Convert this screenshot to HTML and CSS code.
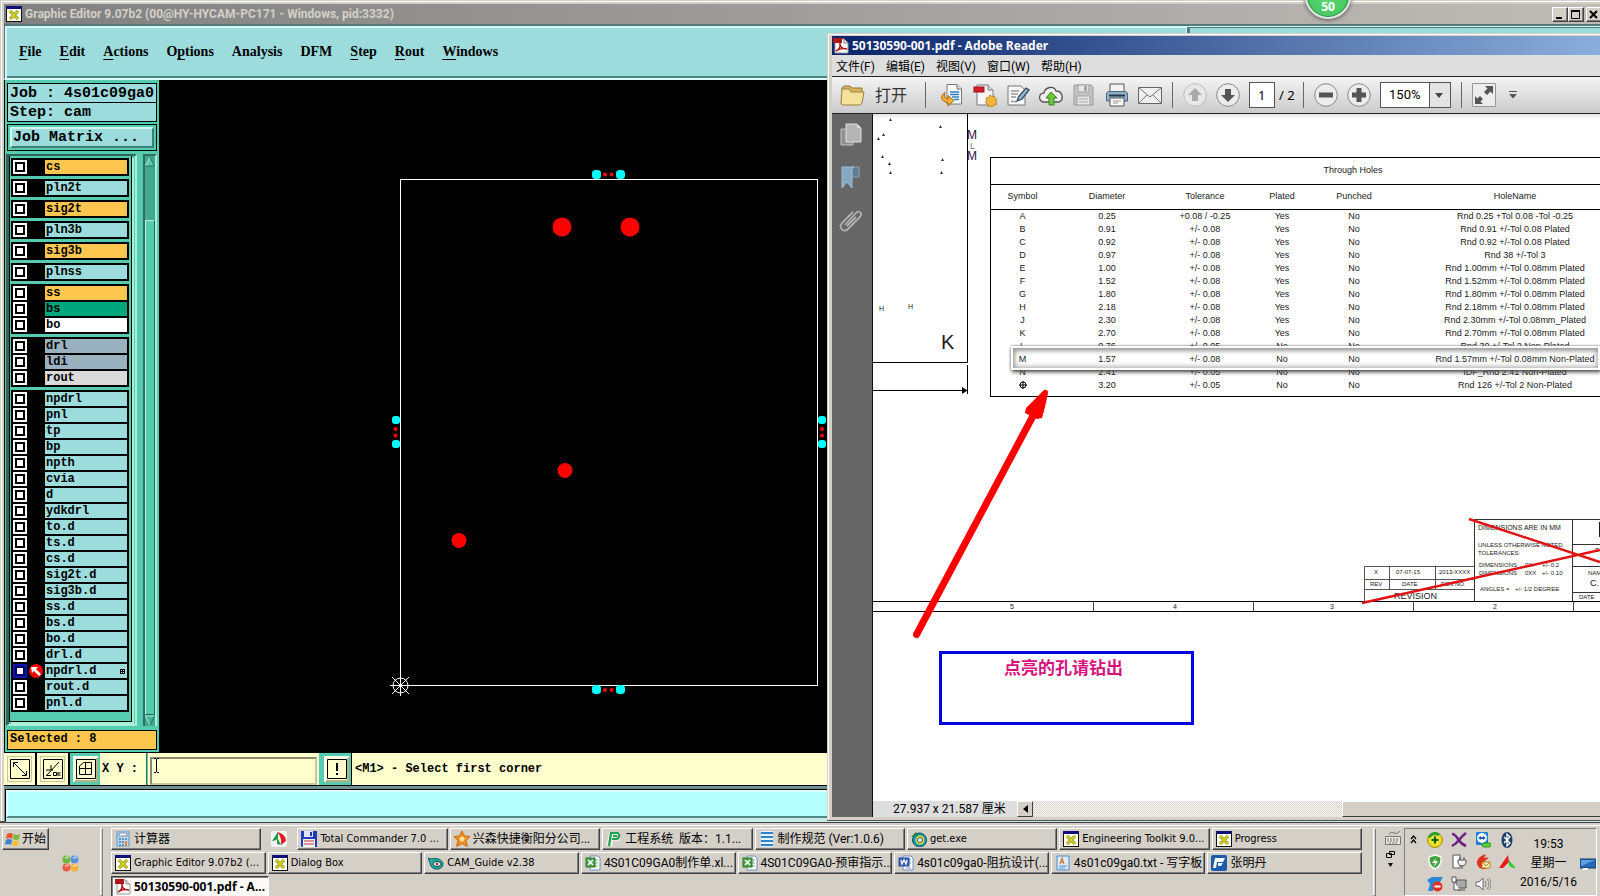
FILE: index.html
```html
<!DOCTYPE html>
<html lang="zh-CN">
<head>
<meta charset="utf-8">
<title>50130590-001.pdf - Adobe Reader</title>
<link rel="stylesheet" href="styles.css">
</head>
<body>
<svg class="defs" width="0" height="0" aria-hidden="true">
  <symbol id="i-x" viewBox="0 0 16 16"><rect width="16" height="16" fill="#111"/><rect width="15" height="3" fill="#10107a"/><rect x="1" y="3" width="14" height="12" fill="#fffff4"/><path d="M4 5l8 8M12 5l-8 8" stroke="#7c7c10" stroke-width="3"/><path d="M4 5l8 8M12 5l-8 8" stroke="#dede20" stroke-width="1.6"/></symbol>
  <symbol id="i-pdf" viewBox="0 0 16 16"><path d="M2 1h9l4 4v10H2z" fill="#fff" stroke="#999"/><path d="M11 1v4h4" fill="#ddd" stroke="#888"/><rect width="9" height="5" fill="#b01818"/><path d="M3 13c3-1 5-5 4-8-1 4 3 6 7 6-4-1-8 0-11 2z" fill="none" stroke="#b01010" stroke-width="1.4"/></symbol>
  <symbol id="i-xls" viewBox="0 0 16 16"><path d="M5 1h8l2 2v12H5z" fill="#fff" stroke="#6d8fc0"/><path d="M8 5h5M8 8h5M8 11h5" stroke="#78b078"/><rect x="1" y="3" width="9" height="9" fill="#4d9e4a" stroke="#2b7a2b"/><path d="M3 5l5 5M8 5l-5 5" stroke="#fff" stroke-width="1.6"/></symbol>
  <symbol id="i-word" viewBox="0 0 16 16"><path d="M5 1h8l2 2v12H5z" fill="#fff" stroke="#6d8fc0"/><path d="M10 5h3M10 8h3M8 13h5" stroke="#7892c8"/><rect x="1" y="3" width="10" height="8" fill="#3b66b8" stroke="#254a94"/><path d="M3 5l1 4 2-4 2 4 1-4" fill="none" stroke="#fff" stroke-width="1.3"/></symbol>
</svg>
<main class="desktop">

<section class="editor">
  <header class="editor-title">
    <svg class="ico"><use href="#i-x"/></svg>
    <h1>Graphic Editor 9.07b2 (00@HY-HYCAM-PC171 - Windows, pid:3332)</h1>
    <div class="winbtns">
      <button aria-label="Minimize"><svg viewBox="0 0 14 13"><path d="M3 10h6" stroke="#000" stroke-width="2"/></svg></button>
      <button aria-label="Maximize"><svg viewBox="0 0 14 13"><path d="M2.500 2.500h8v8h-8z" fill="none" stroke="#000"/><path d="M2 3h9" stroke="#000" stroke-width="2"/></svg></button>
      <button aria-label="Close" class="close"><svg viewBox="0 0 14 13"><path d="M3 3l7 7M10 3l-7 7" stroke="#000" stroke-width="2"/></svg></button>
    </div>
  </header>
  <nav class="menubar">
    <button><u>F</u>ile</button><button><u>E</u>dit</button><button><u>A</u>ctions</button><button>O<u>p</u>tions</button><button>Analysis</button><button>DFM</button><button><u>S</u>tep</button><button><u>R</u>out</button><button><u>W</u>indows</button>
    <div class="menubar-end"></div>
  </nav>
  <div class="work">
    <aside class="side">
      <div class="job">Job : 4s01c09ga0</div>
      <div class="job">Step: cam</div>
      <div class="matrix"><button>Job Matrix ...</button></div>
      <div class="layers">
        <div class="frame"><div class="list">
          <div class="group"><label><input type="checkbox"><i></i><span class="amber">cs</span></label></div>
          <div class="group"><label><input type="checkbox"><i></i><span>pln2t</span></label></div>
          <div class="group"><label><input type="checkbox"><i></i><span class="amber">sig2t</span></label></div>
          <div class="group"><label><input type="checkbox"><i></i><span>pln3b</span></label></div>
          <div class="group"><label><input type="checkbox"><i></i><span class="amber">sig3b</span></label></div>
          <div class="group"><label><input type="checkbox"><i></i><span>plnss</span></label></div>
          <div class="group">
            <label><input type="checkbox"><i></i><span class="amber">ss</span></label>
            <label><input type="checkbox"><i></i><span class="green">bs</span></label>
            <label><input type="checkbox"><i></i><span class="white">bo</span></label>
          </div>
          <div class="group">
            <label><input type="checkbox"><i></i><span class="slate">drl</span></label>
            <label><input type="checkbox"><i></i><span class="slate">ldi</span></label>
            <label><input type="checkbox"><i></i><span class="grey">rout</span></label>
          </div>
          <div class="group">
            <label><input type="checkbox"><i></i><span>npdrl</span></label>
            <label><input type="checkbox"><i></i><span>pnl</span></label>
            <label><input type="checkbox"><i></i><span>tp</span></label>
            <label><input type="checkbox"><i></i><span>bp</span></label>
            <label><input type="checkbox"><i></i><span>npth</span></label>
            <label><input type="checkbox"><i></i><span>cvia</span></label>
            <label><input type="checkbox"><i></i><span>d</span></label>
            <label><input type="checkbox"><i></i><span>ydkdrl</span></label>
            <label><input type="checkbox"><i></i><span>to.d</span></label>
            <label><input type="checkbox"><i></i><span>ts.d</span></label>
            <label><input type="checkbox"><i></i><span>cs.d</span></label>
            <label><input type="checkbox"><i></i><span>sig2t.d</span></label>
            <label><input type="checkbox"><i></i><span>sig3b.d</span></label>
            <label><input type="checkbox"><i></i><span>ss.d</span></label>
            <label><input type="checkbox"><i></i><span>bs.d</span></label>
            <label><input type="checkbox"><i></i><span>bo.d</span></label>
            <label><input type="checkbox"><i></i><span>drl.d</span></label>
            <label><input type="checkbox" checked><i><svg viewBox="0 0 14 14"><circle cx="7" cy="7" r="7" fill="#f00000"/><path d="M2 3h7L7 5l5 5-2 2-5-5-2 2z" fill="#fff"/></svg></i><span class="work-layer">npdrl.d<svg viewBox="0 0 5 5"><rect width="5" height="5"/><path d="M1 1h1v1H1zM3 1h1v1H3zM1 3h1v1H1zM3 3h1v1H3z" fill="#fff"/></svg></span></label>
            <label><input type="checkbox"><i></i><span>rout.d</span></label>
            <label><input type="checkbox"><i></i><span>pnl.d</span></label>
          </div>
        </div></div>
        <div class="scroll">
          <svg viewBox="0 0 11 11"><rect width="11" height="11" fill="#45a68f"/><path d="M5.500 1l5 9.500H.5z" fill="#58cbb0"/><path d="M5.500 1L.5 10.500" stroke="#b4f4e0"/><path d="M5.500 1l5 9.500H.5" fill="none" stroke="#236353"/></svg>
          <div class="thumb"></div>
          <svg viewBox="0 0 11 11"><rect width="11" height="11" fill="#45a68f"/><path d="M5.500 10.500l5-10H.5z" fill="#45b29a"/><path d="M10.500.5H.5l5 10" fill="none" stroke="#b4f4e0"/><path d="M5.500 10.500l5-10" stroke="#236353"/></svg>
        </div>
      </div>
      <div class="selected">Selected : 8</div>
    </aside>
    <div class="canvas">
      <svg width="1440" height="672" viewBox="159 80 1440 672">
        <rect x="400.500" y="179.500" width="417" height="506" fill="none" stroke="#fff"/>
        <g fill="#f00">
          <circle cx="562" cy="227" r="9.500"/><circle cx="630" cy="227" r="9.500"/>
          <circle cx="565" cy="470.500" r="7.500"/><circle cx="459" cy="540.500" r="7.500"/>
          <circle cx="605" cy="174.500" r="2"/><circle cx="611.500" cy="174.500" r="2"/>
          <circle cx="605" cy="690" r="2"/><circle cx="611.500" cy="690" r="2"/>
          <circle cx="395.500" cy="429" r="2"/><circle cx="395.500" cy="435.500" r="2"/>
          <circle cx="822" cy="429" r="2"/><circle cx="822" cy="435.500" r="2"/>
        </g>
        <g fill="#0ff">
          <rect x="592" y="170" width="9" height="9" rx="3.500"/><rect x="616" y="170" width="9" height="9" rx="3.500"/>
          <rect x="592" y="685" width="9" height="9" rx="3.500"/><rect x="616" y="685" width="9" height="9" rx="3.500"/>
          <rect x="392" y="416" width="8" height="8" rx="3"/><rect x="392" y="440" width="8" height="8" rx="3"/>
          <rect x="818" y="416" width="8" height="8" rx="3"/><rect x="818" y="440" width="8" height="8" rx="3"/>
        </g>
        <g fill="none" stroke="#fff"><circle cx="400.500" cy="685.500" r="7.500"/><path d="M390 685.500h22M400.500 675v21M392 677l17 17M409 677l-17 17"/></g>
      </svg>
    </div>
  </div>
  <div class="cmd">
    <button class="tool" aria-label="Zoom area"><svg viewBox="0 0 20 20"><path d="M.5.500h19v19H.5z"/><path d="M4 4l12 12M3.500 8V3.500H8M16.500 12v4.500H12"/></svg></button>
    <button class="tool" aria-label="Angle snap"><svg viewBox="0 0 20 20"><path d="M.5.500h19v19H.5z"/><path d="M16 3L4 16M8 6v5M3 11h7M3 16.500h5M10.500 13.500h3v3h-3zM15 13v4M17.500 13l-2 2 2 2"/></svg></button>
    <button class="tool on" aria-label="Grid snap"><svg viewBox="0 0 20 20"><path d="M.5.500h19v19H.5z"/><path d="M3.500 7l4-3.500h8v12h-12zM9.500 3.500v12M3.500 9.500h12"/></svg></button>
    <label class="xy" for="xy">X Y :</label>
    <div class="xywrap"><input id="xy" type="text"><svg viewBox="0 0 7 15"><path d="M1 .5h2M4 .5h2M3.500 1v13M1 14.500h2M4 14.500h2"/></svg></div>
    <button class="tool on" aria-label="Message"><svg viewBox="0 0 20 20"><path d="M.5.500h19v19H.5z"/><path d="M10 4v8M10 14v2" stroke-width="2"/></svg></button>
    <output>&lt;M1&gt; - Select first corner</output>
  </div>
  <div class="msgbar"><div></div></div>
</section>

<section class="reader">
  <header class="reader-title"><svg class="ico"><use href="#i-pdf"/></svg><h2>50130590-001.pdf - Adobe Reader</h2></header>
  <nav class="reader-menu"><button>文件(F)</button><button>编辑(E)</button><button>视图(V)</button><button>窗口(W)</button><button>帮助(H)</button></nav>
  <div class="toolbar">
    <button class="open"><svg viewBox="0 0 26 24"><path d="M2 20V5l2-2h6l2 2h10v4" fill="#d8b660" stroke="#8c7434"/><path d="M1 21L2 6h7l2 3h13l-2 11-2 2H3z" fill="#f6e29a" stroke="#9a8140"/></svg>打开</button>
    <span class="sep first"></span>
    <button aria-label="Export"><svg viewBox="0 0 24 24"><path d="M7 1.500h10l4.500 4.500v15H7z" fill="#fafafa" stroke="#777"/><path d="M17 1.500v4.500h4.500" fill="#ddd" stroke="#777"/><path d="M10 9h9M10 11.500h9M12 14h7M14 16.500h5" stroke="#2c7cc8" stroke-width="1.500"/><path d="M5 9.500c-5 3-5 9 3 10v3.500l6-5.500-6-5v3.500c-3 0-4.500-3-3-6.500z" fill="#f5ad35" stroke="#a86a10"/></svg></button>
    <button aria-label="Create PDF"><svg viewBox="0 0 24 24"><path d="M4 2h11l5 5v15H4z" fill="#f7f7f7" stroke="#777"/><path d="M15 2v5h5" fill="#ddd" stroke="#777"/><rect x="1" y="4" width="10" height="5" fill="#d21c28" stroke="#a01018"/><path d="M17 12l2 1.500 2.500-.5.500 2.500 2 1.500-1 2 .5 2.500-2.500.5-1.500 2-2-1-2.500.5-.5-2.500-2-1.500 1-2-.5-2.500 2.500-.5z" fill="#f2b63e" stroke="#c08420"/></svg></button>
    <button aria-label="Edit PDF"><svg viewBox="0 0 24 24"><path d="M2 3h13l4 4v15H2z" fill="#f7f7f7" stroke="#777"/><path d="M5 8h8M5 11h7M5 14h5M5 19c3-3 2 2 5-1" fill="none" stroke="#666"/><path d="M11 18l2-5 7-8 3 2-7 9z" fill="#90b5d0" stroke="#33485a" stroke-width="1.300"/></svg></button>
    <button aria-label="Upload"><svg viewBox="0 0 24 24"><path d="M5 19a4.500 4.500 0 0 1 0-9c1-6 10-8 12-2 7 0 8 9 3 11z" fill="#eee" stroke="#555" stroke-width="1.300"/><path d="M12 9l6 6h-3v7h-5v-7H7z" fill="#68c838" stroke="#38841c"/></svg></button>
    <button aria-label="Save"><svg viewBox="0 0 24 24"><path d="M2 2h17l2 2v18H2z" fill="#c4c4c4" stroke="#9a9a9a"/><path d="M6 2h11v7H6zM5 13h13v9H5z" fill="#e6e6e6" stroke="#a0a0a0"/><path d="M12 3h3v5h-3z" fill="#a6a6a6"/><path d="M7 16h9M7 19h9" stroke="#aaa"/></svg></button>
    <button aria-label="Print"><svg viewBox="0 0 24 24"><path d="M5 10V1h14v9" fill="#f4f4f4" stroke="#555"/><path d="M1.500 10l2-1.500h17l2 1.500v8h-21z" fill="#8fb2cc" stroke="#4a6478"/><path d="M4 12.500h16" stroke="#26384a" stroke-width="2"/><path d="M5 15h14v8H5z" fill="#fafafa" stroke="#555"/><path d="M8 18h8M8 20h5" stroke="#999"/></svg></button>
    <button aria-label="Mail"><svg viewBox="0 0 24 24"><path d="M.5 4.500h23v16H.5z" fill="#f0f0f0" stroke="#666"/><path d="M1 5l11 9 11-9M1 20l8-8M23 20l-8-8" fill="none" stroke="#777"/></svg></button>
    <span class="sep"></span>
    <button aria-label="Previous page"><svg viewBox="0 0 24 24"><circle cx="12" cy="12" r="11.300" fill="#e8e8e8" stroke="#bbb"/><path d="M12 5l7 7h-4v6H9v-6H5z" fill="#a9a9a9"/></svg></button>
    <button aria-label="Next page"><svg viewBox="0 0 24 24"><circle cx="12" cy="12" r="11.300" fill="#ececec" stroke="#888"/><path d="M12 19l7-7h-4V6H9v6H5z" fill="#555"/></svg></button>
    <input class="page" type="text" value="1" aria-label="Page">
    <span class="of">/ 2</span>
    <span class="sep"></span>
    <button aria-label="Zoom out"><svg viewBox="0 0 24 24"><circle cx="12" cy="12" r="11.300" fill="#ececec" stroke="#888"/><path d="M5 9.500h14v5H5z" fill="#555"/></svg></button>
    <button aria-label="Zoom in"><svg viewBox="0 0 24 24"><circle cx="12" cy="12" r="11.300" fill="#ececec" stroke="#888"/><path d="M9.500 5h5v4.500H19v5h-4.500V19h-5v-4.500H5v-5h4.500z" fill="#555"/></svg></button>
    <div class="zoom"><select aria-label="Zoom"><option>150%</option></select><svg viewBox="0 0 8 5"><path d="M0 0h8L4 5z" fill="#444"/></svg></div>
    <span class="sep"></span>
    <button aria-label="Read mode"><svg viewBox="0 0 24 24"><path d="M.5.500h23v23H.5z" fill="#ececec" stroke="#999"/><path d="M13 3h8v8l-2.500-2.500-3.500 3.500-3-3L15.500 5.500zM11 21H3v-8l2.500 2.500L8 13l3 3-2.500 2.500z" fill="#555"/></svg></button>
    <button class="more" aria-label="More tools"><svg viewBox="0 0 10 8"><path d="M1 .5h8M2 3.500h6L5 7z" stroke="#555" fill="#555"/></svg></button>
  </div>
  <div class="reader-body">
    <aside class="rail">
      <button aria-label="Pages"><svg viewBox="0 0 24 24"><path d="M2 7h12v16H2z" fill="#8f8f8f" stroke="#c4c4c4"/><path d="M7 2h11l4 4v14H7z" fill="#b4b4b4" stroke="#ddd"/><path d="M18 2v4h4" fill="#ddd"/></svg></button>
      <button aria-label="Bookmarks"><svg viewBox="0 0 24 24"><path d="M12 2h8v10h-7z" fill="#5e7d92" stroke="#87a5b8"/><path d="M3 2h12l-2 2v19l-5-6-5 6z" fill="#84a8c2" stroke="#a0bccf"/></svg></button>
      <button aria-label="Attachments"><svg viewBox="0 0 24 24"><path d="M6 17L17 5c3-3 7 0 4 4L9 21c-4 4-10-1-6-6L14 4M17 9l-9 9" fill="none" stroke="#b0b0b0" stroke-width="1.800"/></svg></button>
    </aside>
    <div class="page-area">
      <div class="doc">
        <svg class="drawing" width="727" height="686" viewBox="873 114 727 686">
          <g fill="none" stroke="#000">
            <path d="M967.500 114v248.500H873M967.500 365v29M873 390.500h94M873 601.500h727M873 611.500h727"/>
            <path stroke="#444" d="M1093.500 602v9M1253.500 602v9M1413.500 602v9M1573.500 602v9"/>
            <path stroke="#333" d="M1474.500 601V519.500H1600M1572.500 519v82M1572 544.500h28M1572 566.500h28M1572 592.500h28"/>
            <path stroke="#555" d="M1364.500 601v-34.500h110M1364 579.500h110M1364 589.500h110M1389.500 566v23M1435.500 566v23"/>
          </g>
          <path d="M962 387l5.500 3.500-5.500 3.500z"/>
          <g fill="#333"><path d="M889 121l1.500-3 1.500 3zM939 128l1.500-3 1.500 3zM882 136l1.500-3 1.500 3zM877 140l1.500-3 1.500 3zM881 158l1.500-3 1.500 3zM888 165l1.500-3 1.500 3zM889 174l1.500-3 1.500 3zM941 161l1.500-3 1.500 3zM940 174l1.500-3 1.500 3z"/></g>
          <g class="t" fill="#1a1a22">
            <text class="s12" x="967" y="139" fill="#2a1240">M</text><text class="s9" x="970" y="149" fill="#777">L</text><text class="s12" x="967" y="160" fill="#2a1240">M</text>
            <text class="s20" x="941" y="349">K</text>
            <text class="s7" x="879" y="311">H</text><text class="s7" x="908" y="309">H</text>
            <text class="s7" x="1010" y="609">5</text><text class="s7" x="1173" y="609">4</text><text class="s7" x="1330" y="609">3</text><text class="s7" x="1493" y="609">2</text>
            <text class="s7" x="1478" y="530">DIMENSIONS ARE IN MM</text>
            <text class="s6" x="1478" y="547">UNLESS OTHERWISE NOTED,</text>
            <text class="s6" x="1478" y="555">TOLERANCES:</text>
            <text class="s6" x="1479" y="567">DIMENSIONS</text><text class="s6" x="1525" y="567">0X.</text><text class="s6" x="1542" y="567">+/- 0.2</text>
            <text class="s6" x="1479" y="575">DIMENSIONS</text><text class="s6" x="1525" y="575">0XX</text><text class="s6" x="1542" y="575">+/- 0.10</text>
            <text class="s6" x="1480" y="591">ANGLES =</text><text class="s6" x="1515" y="591">+/- 1/2 DEGREE</text>
            <text class="s6" x="1374" y="574">X</text><text class="s6" x="1396" y="574">07-07-15</text><text class="s6" x="1439" y="574">2013-XXXX</text>
            <text class="s6" x="1370" y="586">REV</text><text class="s6" x="1402" y="586">DATE</text><text class="s6" x="1441" y="586">ESN NO.</text>
            <text class="s9" x="1394" y="599">REVISION</text>
            <text class="s6" x="1595" y="552">E</text><text class="s6" x="1588" y="575">NAM</text><text class="s9" x="1590" y="586">C.</text><text class="s6" x="1579" y="599">DATE</text>
            <path d="M1599 522h1v15h-1z"/>
          </g>
          <path d="M1469 519l131 43M1362 603l238-53" stroke="#e01414" stroke-width="2.500"/>
        </svg>
        <div class="holes">
          <table>
            <colgroup><col class="c1"><col class="c2"><col class="c3"><col class="c4"><col class="c5"><col class="c6"><col class="c7"></colgroup>
            <thead>
              <tr><th colspan="7">Through Holes</th></tr>
              <tr class="heads"><th>Symbol</th><th>Diameter</th><th>Tolerance</th><th>Plated</th><th>Punched</th><th>HoleName</th><th></th></tr>
            </thead>
            <tbody>
              <tr><td>A</td><td>0.25</td><td>+0.08 / -0.25</td><td>Yes</td><td>No</td><td>Rnd 0.25 +Tol 0.08 -Tol -0.25</td><td></td></tr>
              <tr><td>B</td><td>0.91</td><td>+/- 0.08</td><td>Yes</td><td>No</td><td>Rnd 0.91 +/-Tol 0.08 Plated</td><td></td></tr>
              <tr><td>C</td><td>0.92</td><td>+/- 0.08</td><td>Yes</td><td>No</td><td>Rnd 0.92 +/-Tol 0.08 Plated</td><td></td></tr>
              <tr><td>D</td><td>0.97</td><td>+/- 0.08</td><td>Yes</td><td>No</td><td>Rnd 38 +/-Tol 3</td><td></td></tr>
              <tr><td>E</td><td>1.00</td><td>+/- 0.08</td><td>Yes</td><td>No</td><td>Rnd 1.00mm +/-Tol 0.08mm Plated</td><td></td></tr>
              <tr><td>F</td><td>1.52</td><td>+/- 0.08</td><td>Yes</td><td>No</td><td>Rnd 1.52mm +/-Tol 0.08mm Plated</td><td></td></tr>
              <tr><td>G</td><td>1.80</td><td>+/- 0.08</td><td>Yes</td><td>No</td><td>Rnd 1.80mm +/-Tol 0.08mm Plated</td><td></td></tr>
              <tr><td>H</td><td>2.18</td><td>+/- 0.08</td><td>Yes</td><td>No</td><td>Rnd 2.18mm +/-Tol 0.08mm Plated</td><td></td></tr>
              <tr><td>J</td><td>2.30</td><td>+/- 0.08</td><td>Yes</td><td>No</td><td>Rnd 2.30mm +/-Tol 0.08mm_Plated</td><td></td></tr>
              <tr><td>K</td><td>2.70</td><td>+/- 0.08</td><td>Yes</td><td>No</td><td>Rnd 2.70mm +/-Tol 0.08mm Plated</td><td></td></tr>
              <tr><td>L</td><td>0.76</td><td>+/- 0.05</td><td>No</td><td>No</td><td>Rnd 30 +/-Tol 2 Non-Plated</td><td></td></tr>
              <tr class="lit"><td>M</td><td>1.57</td><td>+/- 0.08</td><td>No</td><td>No</td><td>Rnd 1.57mm +/-Tol 0.08mm Non-Plated</td><td></td></tr>
              <tr><td>N</td><td>2.41</td><td>+/- 0.05</td><td>No</td><td>No</td><td>IDF_Rnd 2.41 Non-Plated</td><td></td></tr>
              <tr><td><svg class="cross" viewBox="0 0 8 8"><circle cx="4" cy="4" r="3" fill="none" stroke="#000"/><path d="M4 0v8M0 4h8" stroke="#000"/></svg></td><td>3.20</td><td>+/- 0.05</td><td>No</td><td>No</td><td>Rnd 126 +/-Tol 2 Non-Plated</td><td></td></tr>
            </tbody>
          </table>
          <div class="lens"></div>
        </div>
        <svg class="arrow" width="140" height="252" viewBox="910 388 140 252"><path d="M916.500 634.500L1034 414" stroke="#f00" stroke-width="7" stroke-linecap="round"/><path d="M1044 390q4-1 4 3l-3 14-3 11-5 1-12-6 1-5z" fill="#f00"/></svg>
        <p class="note">点亮的孔请钻出</p>
      </div>
      <footer class="reader-status"><span>27.937 x 21.587 厘米</span><button aria-label="Scroll left"><svg viewBox="0 0 5 8"><path d="M5 0v8L0 4z"/></svg></button><div class="track"></div><div class="hthumb"></div></footer>
    </div>
  </div>
</section>
<div class="badge">50</div>
</main>

<footer class="taskbar">
  <div class="startcol">
    <button class="start"><svg viewBox="0 0 16 16"><path d="M2 3q3-2 6 0L7 8Q4 6 1 8z" fill="#e8582c"/><path d="M9 3q3 2 6 0l-1 5q-3 2-6 0z" fill="#7cb83c"/><path d="M1 9q3-2 6 0l-1 5q-3-2-6 0z" fill="#3a80d8"/><path d="M8 9q3 2 6 0l-1 5q-3 2-6 0z" fill="#f4c030"/></svg>开始</button>
    <svg class="quick" viewBox="0 0 17 17"><circle cx="4.500" cy="4.500" r="4" fill="#6cb83c"/><circle cx="12.500" cy="4.500" r="4" fill="#5a94dc"/><circle cx="4.500" cy="12.500" r="4" fill="#e85a48"/><circle cx="12.500" cy="12.500" r="4" fill="#f4b038"/><path d="M3 3l4-1M11 3l4-1M3 11l4-1M11 11l4-1" stroke="#fff" opacity=".5" stroke-width="2"/></svg>
  </div>
  <span class="grip"></span>
  <div class="tasks">
    <div class="row">
      <button class="zh"><svg viewBox="0 0 16 16"><rect x="2" width="12" height="16" rx="1" fill="#b8dcf4" stroke="#5890c0"/><rect x="4" y="2" width="8" height="3" fill="#fff" stroke="#78a"/><path d="M4 8h2M7 8h2M10 8h2M4 11h2M7 11h2M4 14h2M7 14h2" stroke="#47a" stroke-width="1.500"/><path d="M11 10v5" stroke="#f08030" stroke-width="2"/></svg>计算器</button>
      <svg class="mini" viewBox="0 0 16 16"><rect width="16" height="16" rx="2" fill="#f4f4f4"/><path d="M7 1L1 10q4 0 6-3z" fill="#169a48"/><path d="M6 1q9 2 9 9l-5 4Q11 6 6 1z" fill="#e01c20"/><path d="M6 6l4 8-4-1z" fill="#169a48"/></svg>
      <button><svg viewBox="0 0 16 16"><path d="M0 0h16v16H1l-1-1z" fill="#2438b8"/><path d="M3 0h9v6H3z" fill="#dce4ff"/><path d="M9 1h2v4H9z" fill="#2438b8"/><path d="M2 8h12v8H2z" fill="#f4f4f4"/><path d="M3 10h10M3 13h10" stroke="#c03030"/></svg>Total Commander 7.0 ...</button>
      <button class="zh"><svg viewBox="0 0 16 16"><path d="M8 0l2.500 5 5.500.5-4 4 1.500 6L8 12.500 2.500 15.500 4 9.500 0 5.500 5.500 5z" fill="#f09020" stroke="#d06808"/><circle cx="8" cy="8" r="2.500" fill="#ffe0a0"/></svg>兴森快捷衡阳分公司...</button>
      <button class="zh"><svg viewBox="0 0 16 16"><path d="M3 1h11v9H7v5H0z" fill="#fff" opacity=".6"/><path d="M3 15L5 2h7q3 3-1 6H6M7 5h4" fill="none" stroke="#20a050" stroke-width="2.200"/></svg>工程系统&nbsp; 版本：1.1...</button>
      <button class="zh"><svg viewBox="0 0 16 16"><path d="M2 0h12v16H2z" fill="#e4f2ff"/><path d="M2 2h12M2 6h12M2 10h12M2 14h12" stroke="#2c84cc" stroke-width="2"/></svg>制作规范 (Ver:1.0.6)</button>
      <button><svg viewBox="0 0 16 16"><circle cx="8.500" cy="9" r="7" fill="#1c9a9a" stroke="#0c4c68"/><circle cx="9" cy="9" r="4.500" fill="#e8d838"/><circle cx="9" cy="9" r="2.500" fill="#f4fcff" stroke="#204c90"/><path d="M0 6l5-5 2 4z" fill="#208048"/></svg>get.exe</button>
      <button><svg><use href="#i-x"/></svg>Engineering Toolkit 9.0...</button>
      <button><svg><use href="#i-x"/></svg>Progress</button>
    </div>
    <div class="row">
      <button><svg><use href="#i-x"/></svg>Graphic Editor 9.07b2 (...</button>
      <button><svg><use href="#i-x"/></svg>Dialog Box</button>
      <button><svg viewBox="0 0 16 16"><path d="M0 3l3 1q9-2 12 4 1 4-4 6-8 1-9-6z" fill="#20b0a0" stroke="#0c6060"/><ellipse cx="9" cy="9" rx="4" ry="2.500" fill="#e8f8f0" stroke="#084848"/><circle cx="9" cy="9" r="1.300" fill="#b02020"/></svg>CAM_Guide v2.38</button>
      <button class="zh"><svg><use href="#i-xls"/></svg>4S01C09GA0制作单.xl...</button>
      <button class="zh"><svg><use href="#i-xls"/></svg>4S01C09GA0-预审指示...</button>
      <button class="zh"><svg><use href="#i-word"/></svg>4s01c09ga0-阻抗设计(...</button>
      <button class="zh"><svg viewBox="0 0 16 16"><path d="M2 1h12v14H2z" fill="#d8ecff" stroke="#4a88c8"/><path d="M4 11h8M4 13h6" stroke="#5890c8"/><path d="M5 9l2-6 2 6M6 7h3" fill="none" stroke="#e07830" stroke-width="1.300"/></svg>4s01c09ga0.txt - 写字板</button>
      <button class="zh"><svg viewBox="0 0 16 16"><rect width="16" height="16" rx="2" fill="#1c5cac"/><path d="M4 3h10l-2 4H6l-1 6H2l1-5zM7 8h5l-2 3H7z" fill="#fff"/></svg>张明丹</button>
    </div>
    <div class="row">
      <button class="active"><svg><use href="#i-pdf"/></svg>50130590-001.pdf - A...</button>
    </div>
  </div>
  <span class="grip"></span>
  <div class="lang">
    <svg viewBox="0 0 16 14"><path d="M4 3q2-3 5-1t6-2" fill="none" stroke="#777"/><path d="M.5 5.500h15v8H.5z" fill="#e6e3dc" stroke="#777"/><path d="M2 8h12M2 10h12M4 12h8" stroke="#777" stroke-dasharray="2 1"/></svg>
    <svg class="small" viewBox="0 0 9 7"><path d="M3.500.5h5v3h-5zM.5 2.500h5v4h-5z" fill="#d4d0c8" stroke="#000"/></svg>
    <svg class="small" viewBox="0 0 9 7"><path d="M2 1h5L4.500 5z"/></svg>
  </div>
  <div class="tray">
    <button class="chev" aria-label="Show hidden icons"><svg viewBox="0 0 7 9"><path d="M1 4l2.500-3L6 4M1 8l2.500-3L6 8" fill="none" stroke="#000" stroke-width="1.300"/></svg></button>
    <div class="icons">
      <svg viewBox="0 0 16 16"><circle cx="8" cy="8" r="7.500" fill="#f0d820" stroke="#a09010"/><path d="M1 5a7.500 7.500 0 0 1 12-3L8 8z" fill="#30a030"/><circle cx="8" cy="8" r="4.800" fill="#f0e840"/><path d="M8 4.500v7M4.500 8h7" stroke="#106010" stroke-width="2.200"/></svg>
      <svg viewBox="0 0 16 16"><path d="M1 2q3 0 6 5t8 7M15 1q-4 3-7 7t-7 6" fill="none" stroke="#702080" stroke-width="2.500"/></svg>
      <svg viewBox="0 0 16 16"><rect x="1" width="12" height="13" rx="1" fill="#1c80d8"/><circle cx="7" cy="6" r="5" fill="#fff"/><path d="M3 6l3-2v1h2V4l3 2-3 2V7H6v1z" fill="#1c60c0"/><rect x="7" y="11" width="9" height="4" rx="2" fill="#58d830" stroke="#309018"/></svg>
      <svg viewBox="0 0 16 16"><ellipse cx="8" cy="8" rx="5.500" ry="8" fill="#1c3c6c"/><path d="M5 5l6 6-3 3V2l3 3-6 6" fill="none" stroke="#fff" stroke-width="1.300"/></svg>
      <svg viewBox="0 0 16 16"><path d="M8 1l6 2q1 9-6 12Q1 12 2 3z" fill="#40a040" stroke="#f4fff0" stroke-width="1.500"/><path d="M9 4L5 9h3l-1 4 4-6H8z" fill="#fff"/></svg>
      <svg viewBox="0 0 16 16"><path d="M2 1h7v13H2z" fill="#fff" stroke="#555"/><path d="M7 6h8v3q-1 3-4 3T7 9zM9 3v3M13 3v3M11 12v3" fill="#eee" stroke="#555"/></svg>
      <svg viewBox="0 0 16 16"><path d="M11 0Q1 3 2 10q2 6 8 5 4-1 4-5-3-2-5 0 0-4 5-6-3-1-5 0z" fill="#e03020"/><path d="M7 8h8v6H7z" fill="#fff0b8" stroke="#c08020"/><path d="M7 8l4 4 4-4" fill="none" stroke="#c08020"/></svg>
      <svg viewBox="0 0 16 16"><path d="M9 1L0 14h4l6-6z" fill="#f01818"/><path d="M10 7l6 7-5-2z" fill="#18e018" stroke="#18d018"/></svg>
      <svg viewBox="0 0 16 16"><path d="M0 4l5-3h11l-3 5H8l-2 9H1l2-7z" fill="#2888d8"/><circle cx="10.500" cy="10.500" r="5" fill="#e03020"/><path d="M7.500 10.500h6" stroke="#fff" stroke-width="2"/></svg>
      <svg viewBox="0 0 16 16"><path d="M5 4h10v8H5z" fill="#aaa" stroke="#555"/><path d="M1 1h4v5H1zM3 6v8h6M7 14h7" fill="#fff" stroke="#555"/></svg>
      <svg viewBox="0 0 16 16"><path d="M1 6h3l4-4v12l-4-4H1z" fill="#fff" stroke="#666"/><path d="M10 5q2 3 0 6M12 3q4 5 0 10M14 2q4 6 0 12" fill="none" stroke="#888"/></svg>
    </div>
    <div class="clock"><span>19:53</span><span>星期一</span><span>2016/5/16</span></div>
    <svg class="desk" viewBox="0 0 16 12"><path d="M0 1h16v9H0z" fill="#2868b8" stroke="#103868"/><path d="M1 2h14L1 8z" fill="#60a0e0"/><path d="M3 11h5" stroke="#fff" stroke-width="2"/></svg>
  </div>
</footer>
</body>
</html>
```
FILE: styles.css
```css
*{box-sizing:border-box}
:root{--face:#d4d0c8;--teal:#55cbb0;--aqua:#9cdcdc;--mono:"Liberation Mono","DejaVu Sans Mono",monospace;--ui:"Noto Sans","Noto Sans CJK SC",sans-serif;--narrow:Roboto,"Noto Sans CJK SC",sans-serif}
body{margin:0;height:100vh;overflow:hidden;display:flex;flex-direction:column;background:var(--face);font:12px/16px var(--ui);color:#000}
button,input,select{font:inherit;color:inherit;margin:0;padding:0;border:0;background:none;border-radius:0}
h1,h2,p{margin:0;font-size:12px;line-height:16px}
svg{display:block;flex:none}
.defs{position:absolute}
.ico{width:16px;height:16px}
.desktop{flex:1;position:relative;overflow:hidden;min-height:0}

/* Graphic editor window */
.editor{position:absolute;inset:0;display:flex;flex-direction:column;padding:4px 0 0 4px;background:var(--face);box-shadow:inset 1px 1px 0 #d4d0c8,inset 2px 2px 0 #fff;border-bottom:1px solid #555}
.editor-title{display:flex;align-items:center;gap:3px;height:20px;flex:none;padding:0 2px;background:linear-gradient(90deg,#808080,#c0bcb8);color:#d4d0c8}
.editor-title h1{flex:1;font-family:var(--narrow);font-weight:700;white-space:nowrap}
.winbtns{display:flex}
.winbtns button{width:16px;height:15px;background:var(--face);border:1px solid;border-color:#fff #404040 #404040 #fff;box-shadow:inset -1px -1px 0 #808080;color:#000}
.winbtns svg{width:14px;height:13px}
.winbtns .close{margin:0 -4px 0 2px}
.menubar{display:flex;gap:18px;height:56px;flex:none;align-items:center;padding-left:14px;background:var(--aqua);border-top:2px solid #527a7a;border-left:1px solid #527a7a;border-bottom:2px solid #dcfafa;box-shadow:inset 0 2px 0 #d4f6f6,inset 2px 0 0 #d4f6f6,inset 0 -2px 0 #4c8484;font:bold 14px/20px "Liberation Serif",serif}
.menubar u{text-underline-offset:3px;text-decoration-thickness:1px}
.menubar-end{margin-left:auto;width:413px;height:50px;border-left:3px solid #527a7a;box-shadow:inset 0 1px 0 #527a7a,-1px 0 0 #e4ffff}
.work{display:flex;flex:1;min-height:0}
.side{width:155px;flex:none;background:var(--teal);border-left:1px solid #000;padding:3px 2px 0 2px;font:bold 15px/19px var(--mono)}
.job{height:20px;margin-bottom:-1px;border:1px solid #000;background:var(--aqua);padding-left:2px;white-space:nowrap}
.matrix{margin-top:3px;border:1px solid #000;padding:2px;height:27px}
.matrix button{display:block;width:100%;height:21px;line-height:17px;text-align:left;padding-left:1px;background:var(--aqua);border:2px solid;border-color:#d0f6f0 #3e7f74 #3e7f74 #d0f6f0;white-space:nowrap}
.layers{display:flex;gap:6px;margin:3px 0 0 -1px}
.frame{width:132px;border:solid;border-width:2px 2px 2px 3px;border-color:#2c6455 #a8f0d8 #a8f0d8 #2f6656;padding:0 3px 2px 0}
.list{border:1px solid #000;border-top:0;box-shadow:2px 2px 0 #a8f0d8;padding:2px 2px 9px 1px;display:grid;gap:3px;font-size:12px;line-height:14px}
.group{background:#000;padding:2px;display:grid;gap:2px}
.group label{display:flex;height:14px}
.group input{appearance:none;width:14px;height:14px;flex:none;background:#fff;box-shadow:inset 0 0 0 2px #fff,inset 0 0 0 4px #000}
.group input:checked{box-shadow:inset 0 0 0 2px #1414b4,inset 0 0 0 4px #000068}
.group i{width:18px;padding-left:2px}
.group i svg{width:14px;height:14px}
.group span{flex:1;background:var(--aqua);padding-left:1px}
.group .amber{background:#fdc64e}
.group .green{background:#00a67c}
.group .white{background:#fff}
.group .slate{background:#9ab2bf}
.group .grey{background:#dadada}
.group .work-layer{display:flex;align-items:center;justify-content:space-between;padding-right:2px}
.work-layer svg{width:5px;height:5px}
.scroll{width:14px;display:flex;flex-direction:column;background:#45a68f;border:solid;border-width:2px 2px 0 2px;border-color:#2c6f5f #a8f0d8 #a8f0d8 #2c6f5f}
.scroll svg{width:10px;height:11px}
.thumb{flex:1;margin-top:53px;background:var(--teal);border:1px solid;border-color:#b4f4e0 #236353 #236353 #b4f4e0}
.selected{margin-top:4px;height:20px;border:1px solid #000;background:#fdc64e;padding-left:2px;font-size:12px;line-height:17px}
.canvas{flex:1;background:#000;overflow:hidden}
.cmd{display:flex;flex:none;height:34px;border-top:1px solid #000;border-bottom:1px solid #000;background:#ffffce;font:bold 12px/32px var(--mono)}
.tool{width:33px;flex:none;display:grid;place-items:center;border-right:2px solid #000;box-shadow:inset 3px 3px 0 #ffffce,inset -3px -3px 0 #ffffce,inset 4px 4px 0 #c8c89c,inset -4px -4px 0 #c8c89c}
.tool svg{width:20px;height:20px;fill:none;stroke:#000}
.tool.on{width:30px;border:3px solid var(--teal);border-right-width:2px;box-shadow:inset 2px 2px 0 #fffff0,inset -2px -2px 0 #b4b488}
.xy{width:47px;padding-left:2px;border-right:1px solid #466}
.xywrap{width:174px;border:solid var(--teal);border-width:0 2px 0 1px;padding:2px;position:relative}
.xywrap input{width:100%;height:28px;border:2px solid;border-color:#8c8c6c #c8c89c #c8c89c #8c8c6c;background:#ffffce;padding-left:4px}
.xywrap svg{position:absolute;left:5px;top:5px;width:7px;height:15px;stroke:#000}
.cmd output{border-left:1px solid #000;padding-left:3px;white-space:nowrap}
.msgbar{height:35px;flex:none;border-top:3px solid #6f9292;border-left:1px solid #6f9292;padding:1px 0 3px 1px;background:#000}
.msgbar div{height:100%;background:#b6ffff;border:2px solid #e0ffff;border-bottom-color:#528a8a;box-shadow:0 4px 0 #c8ecec}

/* Reader window */
.reader{position:absolute;left:827px;right:0;top:33px;bottom:1px;display:flex;flex-direction:column;background:var(--face);padding:3px 0 3px 5px;border-bottom:1px solid #555;box-shadow:inset 1px 1px 0 #d4d0c8,inset 2px 2px 0 #fff}
.reader-title{height:19px;flex:none;display:flex;align-items:center;gap:3px;padding-left:1px;background:linear-gradient(90deg,#0a246a,#8aaedb);color:#fff}
.reader-menu{height:22px;flex:none;display:flex;align-items:center;gap:11px;padding:2px 0 0 4px;background:#dedede;border-bottom:1px solid #222;font-family:var(--narrow)}
.toolbar{height:37px;flex:none;display:flex;align-items:center;gap:9px;padding-left:8px;background:linear-gradient(#f4f4f4,#cbcbcb);border-bottom:1px solid #222;font-size:13px}
.toolbar button svg{width:24px;height:24px}
.toolbar .open{display:flex;align-items:center;gap:9px;font-size:16px;color:#333}
.toolbar .open svg{width:26px}
.toolbar .more svg{width:10px;height:8px}
.toolbar .more{margin-left:3px}
.sep{width:1px;height:26px;background:#666;margin:0 1px}
.sep.first{margin:0 5px 0 9px}
.page{width:26px;height:26px;border:1px solid #555;background:#fff;padding-left:8px}
.of{width:16px;margin:0 -2px 0 -5px;white-space:nowrap}
.zoom{position:relative;width:71px;height:26px}
.zoom select{appearance:none;width:100%;height:100%;border:1px solid #555;padding-left:8px;font-family:var(--narrow);background:linear-gradient(90deg,#fff 48px,#555 48px,#555 49px,#e4e4e4 49px)}
.zoom svg{position:absolute;right:8px;top:11px;width:8px;height:5px}
.reader-body{flex:1;display:flex;min-height:0}
.rail{width:41px;flex:none;background:#666;border-right:1px solid #111;padding:8px 0 0 7px;display:flex;flex-direction:column;gap:19px}
.rail svg{width:24px;height:24px}
.page-area{flex:1;min-width:0;display:flex;flex-direction:column}
.doc{flex:1;min-height:0;background:linear-gradient(#e4e4e4,#fff 5px);position:relative;overflow:hidden}
.drawing{position:absolute;left:0;top:0}
.t{font-family:"Liberation Sans",sans-serif;white-space:pre}
.s6{font-size:6px}.s7{font-size:7px}.s9{font-size:9px}.s12{font-size:12px}.s20{font-size:20px}
.holes{position:absolute;left:117px;top:43px;border:1px solid #000;padding-bottom:4px;font:9px/13px "Liberation Sans",sans-serif;color:#1a1a22}
.holes table{border-collapse:collapse;table-layout:fixed;width:724px}
.holes td,.holes th{padding:0;font-weight:400;text-align:center;white-space:nowrap;height:13px}
.holes th{height:26px;border-bottom:1px solid #000}
.holes .heads th{height:25px}
.c1{width:63px}.c2{width:106px}.c3{width:90px}.c4{width:64px}.c5{width:80px}.c6{width:242px}
.cross{width:8px;height:8px;margin:0 auto}
.lit{position:relative;z-index:2}
.lens{position:absolute;z-index:1;left:20px;top:188px;width:589px;height:24px;background:#fff;border:2px solid #fff;box-shadow:inset 2px 3px 4px #999,inset -2px -2px 4px #bbb,1px 2px 4px #444,0 0 2px #888}
.arrow{position:absolute;left:37px;top:274px}
.note{position:absolute;left:66px;top:537px;width:255px;height:74px;border:3px solid #0000e0;padding-right:6px;text-align:center;font-weight:700;font-size:17px;line-height:28px;color:#d8127d}
.reader-status{height:16px;flex:none;display:flex;background:#dedede;font-family:var(--narrow)}
.reader-status span{width:144px;padding-left:20px;white-space:nowrap}
.reader-status button{width:16px;display:grid;place-items:center;background:var(--face);border:1px solid;border-color:#fff #404040 #404040 #fff}
.reader-status button svg{width:5px;height:8px}
.track{flex:1;background:repeating-conic-gradient(#fff 0 25%,#d4d0c8 0 50%) 0 0/2px 2px}
.hthumb{width:258px;background:var(--face);border:1px solid;border-color:#fff #404040 #404040 #fff;border-right:0}
.badge{position:absolute;left:1305px;top:-27px;width:46px;height:46px;border-radius:50%;background:radial-gradient(circle,#5fd877,#3fc25c);border:2px solid #e0e8e0;box-shadow:inset 0 0 0 1px #2e8c48,0 1px 4px #555;color:#fff;font-weight:700;text-align:center;padding-top:24px}

/* Taskbar */
.taskbar{flex:none;height:74px;display:flex;padding:5px 3px 0 2px;border-top:1px solid #404040;box-shadow:inset 0 2px 0 #d4d0c8,inset 0 3px 0 #fff;font-family:var(--narrow)}
.startcol{width:98px}
.start,.row button{height:22px;display:flex;align-items:center;background:var(--face);border:1px solid;border-color:#fff #404040 #404040 #fff;box-shadow:inset -1px -1px 0 #808080;white-space:nowrap;overflow:hidden}
.start{width:47px;gap:1px;padding-left:2px}
.start svg,.row svg{width:16px;height:16px}
.quick{width:17px;height:17px;margin:5px 0 0 60px}
.grip{width:3px;border:1px solid;border-color:#fff #808080 #808080 #fff}
.tasks{flex:1;min-width:0;margin:0 11px 0 8px;display:flex;flex-direction:column;gap:2px}
.row{display:flex;gap:2px;align-items:center}
.row button{flex:1 1 0;min-width:0;gap:3px;padding-left:3px;font-family:"DejaVu Sans Condensed","DejaVu Sans",sans-serif;font-size:11px}
.row .zh{font-family:var(--narrow);font-size:12px}
.row .mini{margin:0 8px}
.row button.active{flex:0 0 158px;font-family:var(--ui);font-size:12px;font-weight:700;background:#fbfaf8;border-color:#404040 #fff #fff #404040;box-shadow:inset 1px 1px 0 #808080}
.lang{width:28px;padding:3px 0 0 9px}
.lang svg{width:16px;height:14px;margin-bottom:6px}
.lang .small{width:9px;height:7px;margin:0 0 4px 1px}
.tray{display:flex;width:193px;border:1px solid;border-color:#808080 #fff #fff #808080}
.chev{width:19px;height:20px;padding-left:5px}
.chev svg{width:7px;height:9px}
.icons{display:grid;grid-template-columns:repeat(4,16px);grid-auto-rows:16px;gap:6px 8px;padding:3px 0 0 3px}
.icons svg{width:16px;height:16px}
.clock{flex:1;display:flex;flex-direction:column;align-items:center;padding:6px 0 0 2px;line-height:19px;white-space:nowrap}
.desk{width:16px;height:12px;margin-top:29px}
```
